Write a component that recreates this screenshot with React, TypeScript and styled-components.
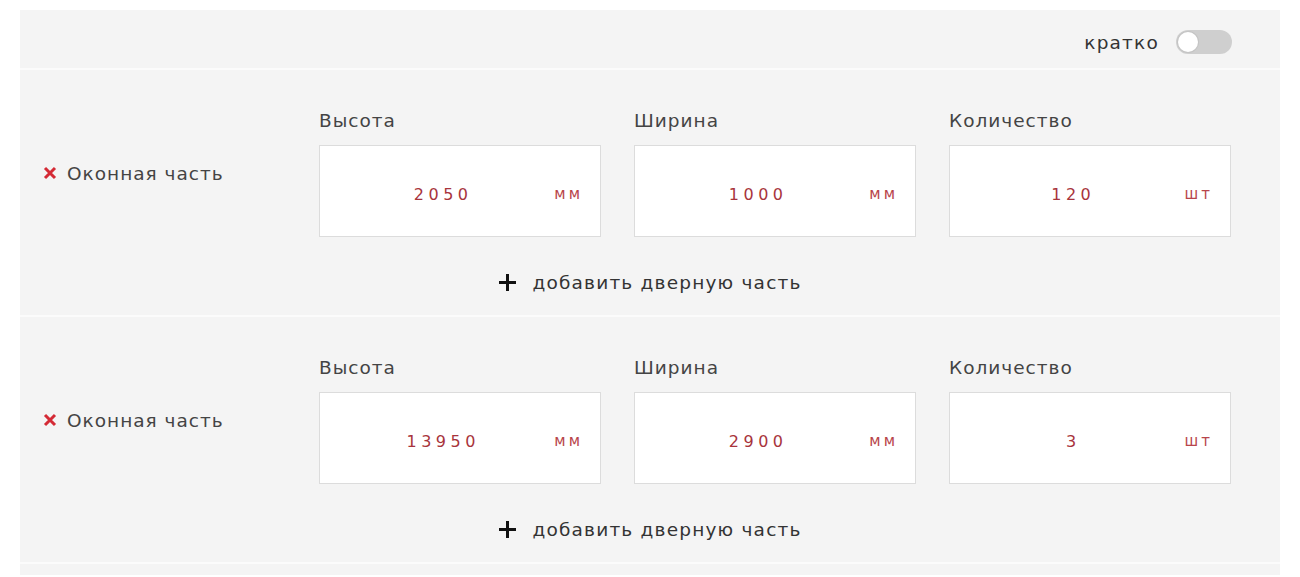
import React, { useState } from "react";
import styled, { createGlobalStyle } from "styled-components";

const GlobalStyle = createGlobalStyle`
  body {
    margin: 0;
    background: #ffffff;
    font-family: "DejaVu Sans", "Open Sans", sans-serif;
    color: #333333;
  }
`;

const Page = styled.div`
  padding: 10px 20px 0 20px;
`;

const Panel = styled.div`
  display: flex;
  flex-direction: column;
  gap: 2px;
  background: #fbfbfb;
`;

const Header = styled.div`
  height: 58px;
  background: #f4f4f4;
  display: flex;
  align-items: center;
  justify-content: flex-end;
  gap: 17px;
  padding: 6px 48px 0 0;
  box-sizing: border-box;
`;

const ToggleLabel = styled.span`
  font-size: 18.5px;
  letter-spacing: 1.2px;
  color: #333;
`;

const Toggle = styled.button<{ $on: boolean }>`
  width: 56px;
  height: 24px;
  border: none;
  border-radius: 12px;
  padding: 0;
  background: ${(p) => (p.$on ? "#b5333a" : "#cfcfcf")};
  position: relative;
  cursor: pointer;
`;

const Knob = styled.span<{ $on: boolean }>`
  position: absolute;
  top: 2px;
  left: ${(p) => (p.$on ? "34px" : "2px")};
  width: 20px;
  height: 20px;
  border-radius: 50%;
  background: #fff;
  box-shadow: 0 0 0 1px #c4c4c4;
`;

const Section = styled.div`
  background: #f4f4f4;
  padding: 39px 0 21px;
`;

const NextSection = styled.div`
  background: #f4f4f4;
  height: 11px;
`;

const Row = styled.div`
  display: grid;
  grid-template-columns: 243px repeat(3, 282px);
  column-gap: 33px;
  padding: 0 49px 0 23px;
`;

const PartName = styled.div`
  align-self: center;
  display: flex;
  align-items: center;
  gap: 10px;
  font-size: 18.5px;
  letter-spacing: 1px;
  color: #444;
  white-space: nowrap;
`;

const Field = styled.div`
  display: flex;
  flex-direction: column;
`;

const FieldLabel = styled.div`
  font-size: 18.5px;
  letter-spacing: 1px;
  line-height: 24px;
  color: #444;
  margin-bottom: 12px;
`;

const Box = styled.div`
  height: 92px;
  box-sizing: border-box;
  background: #fff;
  border: 1px solid #dcdcdc;
  display: flex;
  align-items: center;
  padding: 6px 17px 0 0;
`;

const Value = styled.span`
  flex: 1;
  text-align: center;
  font-family: "DejaVu Sans", sans-serif;
  font-size: 16px;
  letter-spacing: 4.5px;
  padding-left: 12px;
  color: #a8343c;
`;

const Unit = styled.span`
  font-family: "DejaVu Sans", sans-serif;
  font-size: 15px;
  letter-spacing: 3px;
  color: #b8454b;
`;

const AddRow = styled.button`
  display: flex;
  align-items: center;
  justify-content: center;
  gap: 15px;
  margin: 33px auto 0;
  height: 24px;
  border: none;
  background: none;
  font-family: "DejaVu Sans", "Open Sans", sans-serif;
  font-size: 18.5px;
  letter-spacing: 1.2px;
  color: #333;
  cursor: pointer;
`;

const Cross = () => (
  <svg width="14" height="14" viewBox="0 0 14 14">
    <path d="M2 2 L12 12 M12 2 L2 12" stroke="#d42a35" strokeWidth="3" />
  </svg>
);

const Plus = () => (
  <svg width="19" height="19" viewBox="0 0 19 19">
    <path d="M9.5 1 V18 M1 9.5 H18" stroke="#111" strokeWidth="3" />
  </svg>
);

type Part = { h: string; w: string; n: string };

const parts: Part[] = [
  { h: "2050", w: "1000", n: "120" },
  { h: "13950", w: "2900", n: "3" },
];

function PartSection({ part }: { part: Part }) {
  const fields = [
    { label: "Высота", value: part.h, unit: "мм" },
    { label: "Ширина", value: part.w, unit: "мм" },
    { label: "Количество", value: part.n, unit: "шт" },
  ];
  return (
    <Section>
      <Row>
        <PartName>
          <Cross />
          Оконная часть
        </PartName>
        {fields.map((f) => (
          <Field key={f.label}>
            <FieldLabel>{f.label}</FieldLabel>
            <Box>
              <Value>{f.value}</Value>
              <Unit>{f.unit}</Unit>
            </Box>
          </Field>
        ))}
      </Row>
      <AddRow type="button">
        <Plus />
        добавить дверную часть
      </AddRow>
    </Section>
  );
}

export default function App() {
  const [short, setShort] = useState(false);
  return (
    <>
      <GlobalStyle />
      <Page>
        <Panel>
          <Header>
            <ToggleLabel>кратко</ToggleLabel>
            <Toggle $on={short} onClick={() => setShort(!short)}>
              <Knob $on={short} />
            </Toggle>
          </Header>
          {parts.map((p, i) => (
            <PartSection key={i} part={p} />
          ))}
          <NextSection />
        </Panel>
      </Page>
    </>
  );
}
